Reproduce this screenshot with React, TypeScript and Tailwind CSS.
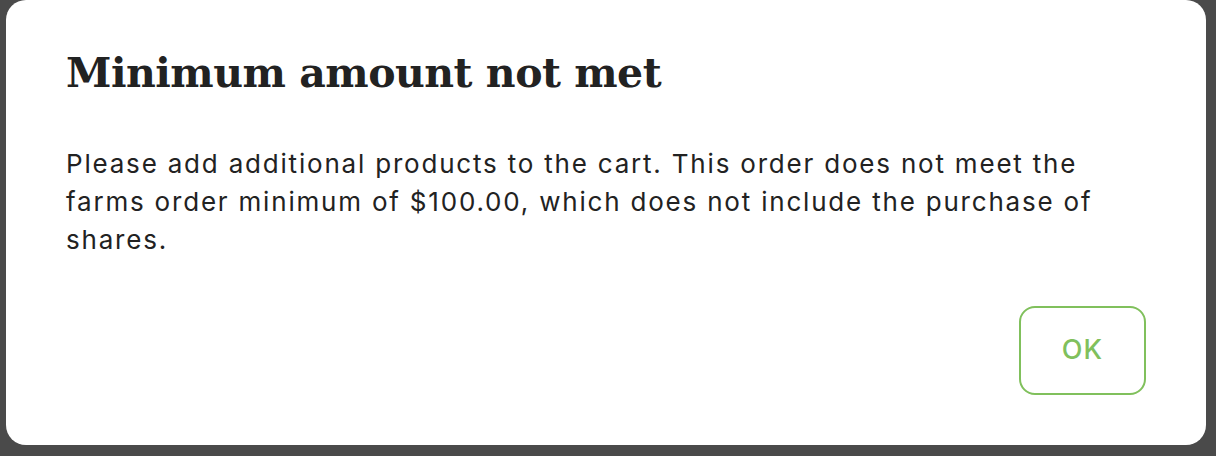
export default function App() {
  return (
    <div className="h-[456px] w-full overflow-hidden bg-[#4a4a4a]">
      <div className="ml-[6px] flex h-[445px] w-[1200px] flex-col rounded-[20px] bg-white px-[60px] pt-[43px] pb-[50px]">
        <h1
          className="text-[41px] font-bold leading-[60px] tracking-[-0.5px] text-[#222222]"
          style={{ fontFamily: '"DejaVu Serif", serif' }}
        >
          Minimum amount not met
        </h1>
        <p
          className="mt-[42px] text-[26px] leading-[38px] tracking-[1.8px] text-[#222222]"
          style={{ fontFamily: 'Inter, "Noto Sans", sans-serif' }}
        >
          Please add additional products to the cart. This order does not meet the
          <br />
          farms order minimum of $100.00, which does not include the purchase of
          <br />
          shares.
        </p>
        <div className="mt-auto flex justify-end">
          <button
            className="h-[89px] w-[127px] rounded-[16px] border-2 border-[#80c05c] bg-white text-[27px] font-medium tracking-[1px] text-[#80c05c]"
            style={{ fontFamily: 'Inter, "Noto Sans", sans-serif' }}
          >
            OK
          </button>
        </div>
      </div>
    </div>
  );
}
